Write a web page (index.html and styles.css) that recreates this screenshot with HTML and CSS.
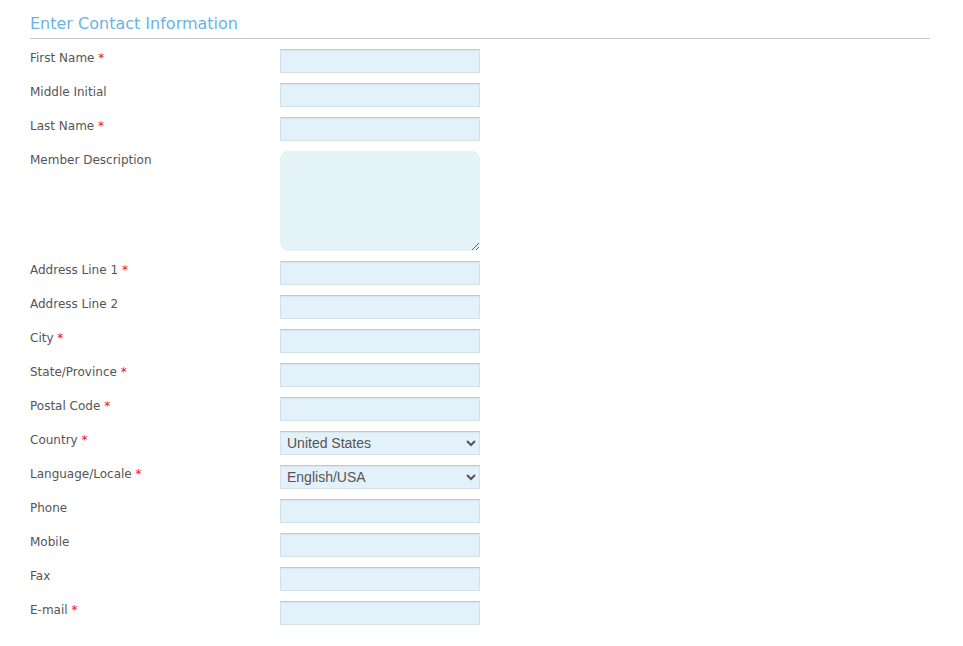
FILE: index.html
```html
<!DOCTYPE html>
<html lang="en">

<head>
  <meta charset="UTF-8">
  <meta name="viewport" content="width=device-width, initial-scale=1.0">
  <title>Enter Contact Information</title>
  <link rel="stylesheet" href="styles.css">
</head>

<body>

  <div class="contact-form">
    <h2>Enter Contact Information</h2>

    <div class="form-grid">
      <label>First Name <span class="req">*</span></label>
      <input type="text">

      <label>Middle Initial</label>
      <input type="text">

      <label>Last Name <span class="req">*</span></label>
      <input type="text">

      <label>Member Description</label>
      <textarea></textarea>

      <label>Address Line 1 <span class="req">*</span></label>
      <input type="text">

      <label>Address Line 2</label>
      <input type="text">

      <label>City <span class="req">*</span></label>
      <input type="text">

      <label>State/Province <span class="req">*</span></label>
      <input type="text">

      <label>Postal Code <span class="req">*</span></label>
      <input type="text">

      <label>Country <span class="req">*</span></label>
      <select>
        <option>United States</option>
        <option>Canada</option>
      </select>

      <label>Language/Locale <span class="req">*</span></label>
      <select>
        <option>English/USA</option>
        <option>French/Canada</option>
      </select>

      <label>Phone</label>
      <input type="text">

      <label>Mobile</label>
      <input type="text">

      <label>Fax</label>
      <input type="text">

      <label>E-mail <span class="req">*</span></label>
      <input type="text">
    </div>
  </div>

</body>

</html>
```

FILE: styles.css
```css
* {
  margin: 0;
  padding: 0;
  box-sizing: border-box;
}

body {
  background-color: #fff;
  font-family: "DejaVu Sans", Verdana, sans-serif;
}

.contact-form {
  width: 900px;
  margin: 0 0 0 30px;
  padding-top: 14px;
}

.contact-form h2 {
  font-size: 16px;
  font-weight: normal;
  color: #6bb3e3;
  padding-bottom: 5px;
  border-bottom: 1px solid #cccccc;
  margin-bottom: 10px;
}

.form-grid {
  display: grid;
  grid-template-columns: 250px 200px;
  row-gap: 10px;
}

.form-grid label {
  font-size: 12px;
  color: #555;
  padding-top: 2px;
}

.req {
  color: #e8101a;
}

.form-grid input,
.form-grid select {
  height: 24px;
  width: 200px;
  background-color: #e3f1fa;
  border: 1px solid #d5e0e8;
  border-top-color: #bfc9d2;
  box-shadow: inset 0 1px 1px rgba(0, 0, 0, 0.05);
}

.form-grid select {
  font-family: "Liberation Sans", Arial, sans-serif;
  font-size: 14px;
  color: #555;
  padding-left: 2px;
}

.form-grid textarea {
  height: 100px;
  width: 200px;
  background-color: #e3f3f8;
  border: none;
  border-radius: 8px;
}
```
